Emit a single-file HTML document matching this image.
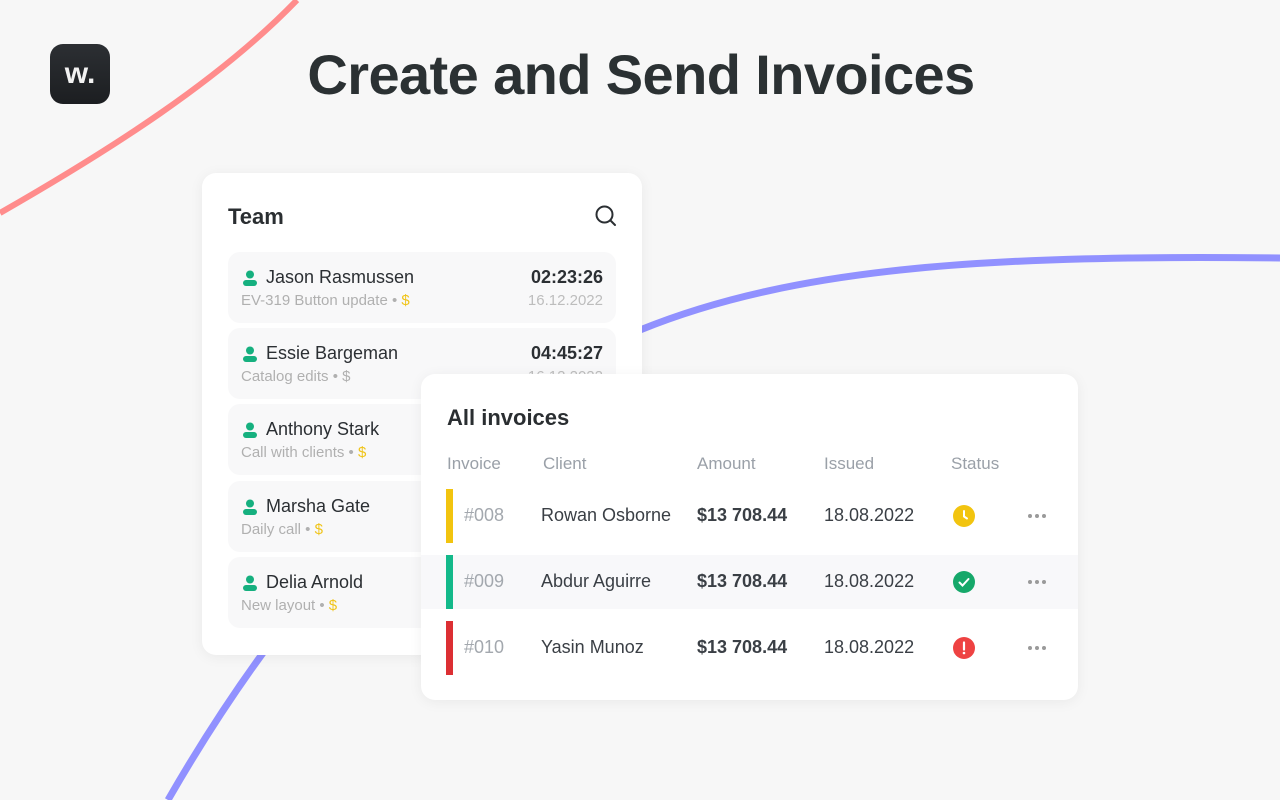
<!DOCTYPE html>
<html><head><meta charset="utf-8"><style>
*{margin:0;padding:0;box-sizing:border-box}
body{width:1280px;height:800px;background:#f7f7f7;font-family:"Liberation Sans",sans-serif;position:relative;overflow:hidden;color:#2a2e31}
.abs{position:absolute}
.logo{left:50px;top:44px;width:60px;height:60px;border-radius:13px;background:linear-gradient(#2c2f33,#1c1e21);color:#f2f2f2;font-weight:bold;font-size:30px;text-align:center;line-height:60px}
h1{position:absolute;left:0;width:1280px;text-align:center;top:42px;font-size:56px;letter-spacing:-0.6px;font-weight:bold;color:#2b3133;padding-left:2px}
.card{background:#fff;border-radius:14px;box-shadow:0 2px 14px rgba(0,0,0,.06)}
.team{left:202px;top:173px;width:440px;height:482px}
.team .t{left:26px;top:30px;font-size:22px;font-weight:bold}
.row{position:absolute;left:26px;width:388px;height:71px;background:#f8f8f9;border-radius:12px}
.nm{position:absolute;left:38px;top:15px;font-size:18px;color:#2b2f33}
.sb{position:absolute;left:13px;top:40px;font-size:15px;color:#b0b0b0}
.tm{position:absolute;right:13px;top:15px;font-size:18px;font-weight:bold;color:#2b2f33}
.dt{position:absolute;right:13px;top:40px;font-size:15px;color:#bdbdbd}
.y{color:#f0c419}
.ic{position:absolute;left:15px;top:18px}
.inv{left:421px;top:374px;width:657px;height:326px}
.inv .t{left:26px;top:30px;font-size:22px;font-weight:bold}
.hd{top:80px;font-size:17px;color:#9aa0a8}
.ir{position:absolute;left:0;width:657px;height:54px}
.bar{position:absolute;left:25px;top:0;width:7px;height:54px}
.c{position:absolute;top:16px;font-size:18px;color:#3a3f45}
.dots{position:absolute;left:607px;top:25px;width:22px;height:4px}
.dots i{float:left;width:4px;height:4px;border-radius:2px;background:#9a9a9a;margin-right:3px}
</style></head><body>
<svg class="abs" style="left:0;top:0" width="1280" height="800">
<path d="M0 213 C110 150 220 80 297 0" stroke="#ff8c8c" stroke-width="6" fill="none"/>
<path d="M168 800 C260 640 420 420 640 330 C800 265 1000 255 1280 258" stroke="#9191ff" stroke-width="7" fill="none"/>
</svg>
<div class="abs logo">w.</div>
<h1>Create and Send Invoices</h1>
<div class="abs card team">
<div class="abs t" style="top:31px">Team</div>
<svg class="abs" style="left:392px;top:31px" width="24" height="24" viewBox="0 0 24 24"><circle cx="10.5" cy="10.5" r="8" stroke="#2b2f33" stroke-width="2" fill="none"/><path d="M16.5 16.5 L21 21" stroke="#2b2f33" stroke-width="2" stroke-linecap="round"/></svg>
<div class="row" style="top:79px"><svg class="ic" width="14" height="16"><circle cx="7" cy="4.5" r="4" fill="#16b07f"/><rect x="0" y="10" width="14" height="6" rx="3" fill="#16b07f"/></svg><div class="nm">Jason Rasmussen</div><div class="sb">EV-319 Button update • <span class="y">$</span></div><div class="tm">02:23:26</div><div class="dt">16.12.2022</div></div>
<div class="row" style="top:155px"><svg class="ic" width="14" height="16"><circle cx="7" cy="4.5" r="4" fill="#16b07f"/><rect x="0" y="10" width="14" height="6" rx="3" fill="#16b07f"/></svg><div class="nm">Essie Bargeman</div><div class="sb">Catalog edits • $</div><div class="tm">04:45:27</div><div class="dt">16.12.2022</div></div>
<div class="row" style="top:231px"><svg class="ic" width="14" height="16"><circle cx="7" cy="4.5" r="4" fill="#16b07f"/><rect x="0" y="10" width="14" height="6" rx="3" fill="#16b07f"/></svg><div class="nm">Anthony Stark</div><div class="sb">Call with clients • <span class="y">$</span></div></div>
<div class="row" style="top:308px"><svg class="ic" width="14" height="16"><circle cx="7" cy="4.5" r="4" fill="#16b07f"/><rect x="0" y="10" width="14" height="6" rx="3" fill="#16b07f"/></svg><div class="nm">Marsha Gate</div><div class="sb">Daily call • <span class="y">$</span></div></div>
<div class="row" style="top:384px"><svg class="ic" width="14" height="16"><circle cx="7" cy="4.5" r="4" fill="#16b07f"/><rect x="0" y="10" width="14" height="6" rx="3" fill="#16b07f"/></svg><div class="nm">Delia Arnold</div><div class="sb">New layout • <span class="y">$</span></div></div>
</div>
<div class="abs card inv">
<div class="abs t" style="top:31px">All invoices</div>
<div class="abs hd" style="left:26px">Invoice</div>
<div class="abs hd" style="left:122px">Client</div>
<div class="abs hd" style="left:276px">Amount</div>
<div class="abs hd" style="left:403px">Issued</div>
<div class="abs hd" style="left:530px">Status</div>
<div class="ir" style="top:115px"><div class="bar" style="background:#f2c40f"></div><div class="c" style="left:43px;color:#a3a8ae">#008</div><div class="c" style="left:120px">Rowan Osborne</div><div class="c" style="left:276px;font-weight:bold">$13 708.44</div><div class="c" style="left:403px">18.08.2022</div>
<svg class="abs" style="left:532px;top:16px" width="22" height="22"><circle cx="11" cy="11" r="11" fill="#f2c40f"/><path d="M11 6 V11.5 L14 13.5" stroke="#fff" stroke-width="2" fill="none" stroke-linecap="round"/></svg><div class="dots"><i></i><i></i><i></i></div></div>
<div class="ir" style="top:181px;background:#f8f8fa"><div class="bar" style="background:#13b98a"></div><div class="c" style="left:43px;color:#a3a8ae">#009</div><div class="c" style="left:120px">Abdur Aguirre</div><div class="c" style="left:276px;font-weight:bold">$13 708.44</div><div class="c" style="left:403px">18.08.2022</div>
<svg class="abs" style="left:532px;top:16px" width="22" height="22"><circle cx="11" cy="11" r="11" fill="#16a86a"/><path d="M6.5 11.5 L9.5 14.5 L15.5 8" stroke="#fff" stroke-width="2" fill="none" stroke-linecap="round"/></svg><div class="dots"><i></i><i></i><i></i></div></div>
<div class="ir" style="top:247px"><div class="bar" style="background:#dc2f33"></div><div class="c" style="left:43px;color:#a3a8ae">#010</div><div class="c" style="left:120px">Yasin Munoz</div><div class="c" style="left:276px;font-weight:bold">$13 708.44</div><div class="c" style="left:403px">18.08.2022</div>
<svg class="abs" style="left:532px;top:16px" width="22" height="22"><circle cx="11" cy="11" r="11" fill="#ee4242"/><path d="M11 5.5 V12.5" stroke="#fff" stroke-width="2.2" stroke-linecap="round"/><circle cx="11" cy="16" r="1.3" fill="#fff"/></svg><div class="dots"><i></i><i></i><i></i></div></div>
</div>
</body></html>
